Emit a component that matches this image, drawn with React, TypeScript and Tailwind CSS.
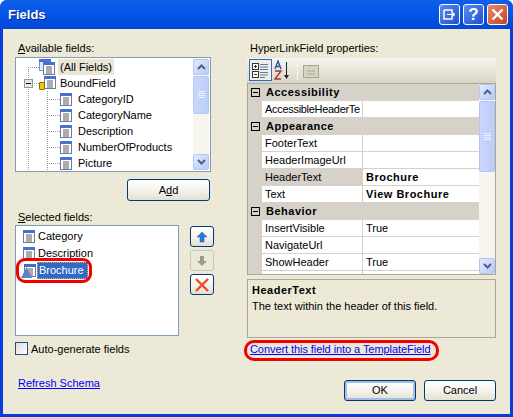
import type { ReactNode } from "react";

const font = { fontFamily: "'Liberation Sans', Arial, sans-serif" };

function FieldIcon({ tint = false }: { tint?: boolean }) {
  return (
    <svg width="13" height="13" viewBox="0 0 13 13" className="shrink-0">
      <rect x="0.5" y="0.5" width="11" height="12" fill="#fff" stroke="#6b7b9c" />
      <rect x="0" y="0" width="12" height="3" fill={tint ? "#3f6fc0" : "#4a6fd0"} />
      <path d="M3 5h6M3 7h6M3 9h6M3 11h6" stroke="#5a5a5a" />
    </svg>
  );
}

function Connector({ width, lines, tick, last }: { width: number; lines: number[]; tick: number; last?: boolean }) {
  return (
    <svg width={width} height="16" className="shrink-0">
      {lines.map((x) => (
        <line key={x} x1={x + 0.5} x2={x + 0.5} y1={last && x === 12 ? 8 : 0} y2="16" stroke="#9a9a9a" strokeDasharray="1 1" />
      ))}
      <line x1={tick} x2={width} y1="8.5" y2="8.5" stroke="#9a9a9a" strokeDasharray="1 1" />
    </svg>
  );
}

function TreeLeaf({ label }: { label: string }) {
  return (
    <div className="flex h-4 items-center">
      <Connector width={44} lines={[12, 31]} tick={31} />
      <FieldIcon />
      <span className="ml-[5px]">{label}</span>
    </div>
  );
}

function ScrollArrow({ up, className = "" }: { up?: boolean; className?: string }) {
  return (
    <div className={`flex h-[16px] items-center justify-center rounded-[2px] border border-[#b5c7f0] bg-gradient-to-br from-[#e3ebfe] to-[#b7c9f8] ${className}`}>
      <svg width="9" height="6" viewBox="0 0 9 6">
        <path d={up ? "M1 5l3.5-3.5L8 5" : "M1 1l3.5 3.5L8 1"} fill="none" stroke="#4d6185" strokeWidth="2" />
      </svg>
    </div>
  );
}

function ScrollBar({ thumb, gap }: { thumb: number; gap: number }) {
  return (
    <div className="flex w-[16px] shrink-0 flex-col self-stretch bg-[#f6f5ee]">
      <ScrollArrow up />
      <div className="mt-[1px] flex flex-col items-center justify-center gap-[1px] rounded-[2px] border border-[#b5c7f0] bg-gradient-to-r from-[#c9d7fc] to-[#bccdf9]" style={{ height: thumb }}>
        <div className="h-[1px] w-[7px] bg-[#eef2fe]" />
        <div className="h-[1px] w-[7px] bg-[#eef2fe]" />
        <div className="h-[1px] w-[7px] bg-[#eef2fe]" />
        <div className="h-[1px] w-[7px] bg-[#eef2fe]" />
      </div>
      <div style={{ height: gap }} />
      <ScrollArrow />
    </div>
  );
}

function XpButton({ children, isDefault, className = "" }: { children: ReactNode; isDefault?: boolean; className?: string }) {
  return (
    <div className={`flex items-center justify-center rounded-[3px] border border-[#003c74] bg-gradient-to-b from-white via-[#f5f4ee] to-[#e3e0d0] ${isDefault ? "shadow-[inset_0_0_0_2px_#a4bce8]" : ""} ${className}`}>
      {children}
    </div>
  );
}

function CategoryRow({ label }: { label: string }) {
  return (
    <div className="flex h-[17px] items-center bg-[#d6d2ca] font-bold tracking-[0.5px]">
      <div className="ml-[3px] flex h-[9px] w-[9px] items-center justify-center border border-black">
        <div className="h-[1px] w-[5px] bg-black" />
      </div>
      <span className="ml-[6px]">{label}</span>
    </div>
  );
}

function PropRow({ name, value, bold, selected, tight }: { name: string; value?: string; bold?: boolean; selected?: boolean; tight?: boolean }) {
  return (
    <div className="flex h-[17px] bg-[#d6d2ca]">
      <div className="w-[14px] shrink-0" />
      <div className={`flex w-[100px] shrink-0 items-center overflow-hidden whitespace-nowrap border-b border-[#d6d2ca] pl-[3px] ${selected ? "bg-[#d6d2ca]" : "bg-white"} ${tight ? "tracking-[-0.3px]" : ""}`}>{name}</div>
      <div className={`ml-[1px] flex flex-1 items-center border-b border-[#d6d2ca] bg-white pl-[3px] ${bold ? "font-bold tracking-[0.5px]" : ""}`}>{value}</div>
    </div>
  );
}

export default function App() {
  return (
    <div className="relative flex h-[417px] w-[513px] flex-col overflow-hidden rounded-t-[7px] bg-[#0a3be0] text-[11px] leading-[13px] text-black" style={font}>
      {/* title bar */}
      <div className="flex h-[29px] shrink-0 items-center bg-gradient-to-b from-[#0f5fe8] via-[#0454e6] to-[#0047d8] pl-[8px] pr-[5px]">
        <span className="text-[13px] font-bold text-white [text-shadow:1px_1px_#0a2a90]">Fields</span>
        <div className="ml-auto flex gap-[3px]">
          <div className="flex h-[21px] w-[21px] items-center justify-center rounded-[3px] border border-white bg-gradient-to-br from-[#5a8cf0] to-[#1f4fd0]">
            <svg width="13" height="11" viewBox="0 0 13 11">
              <path d="M1 1h8v2M1 1v9h8V8" fill="none" stroke="#fff" strokeWidth="1.5" />
              <path d="M4 5.5h5V3l3 2.5L9 8V5.5" fill="#fff" stroke="#fff" />
            </svg>
          </div>
          <div className="flex h-[21px] w-[21px] items-center justify-center rounded-[3px] border border-white bg-gradient-to-br from-[#5a8cf0] to-[#1f4fd0] text-[17px] font-bold text-white">?</div>
          <div className="flex h-[21px] w-[21px] items-center justify-center rounded-[3px] border border-white bg-gradient-to-br from-[#e88a6a] to-[#c8401c]">
            <svg width="13" height="13" viewBox="0 0 13 13">
              <path d="M1.5 1.5l10 10M11.5 1.5l-10 10" stroke="#fff" strokeWidth="2.4" />
            </svg>
          </div>
        </div>
      </div>

      {/* dialog body */}
      <div className="mx-[3px] mb-[3px] flex flex-1 flex-col bg-[#ebe8d9] bg-[radial-gradient(#f5f1c4_0.6px,transparent_0.8px)] bg-[size:4px_4px] pl-[12px] pr-[14px]">
        <div className="flex flex-1 gap-[33px]">
          {/* left column */}
          <div className="flex w-[199px] shrink-0 flex-col">
            <div className="ml-[3px] mt-[13px] h-[13px]"><span className="underline">A</span>vailable fields:</div>
            <div className="mt-[2px] flex h-[115px] w-[196px] gap-[1px] border border-[#7f9db9] bg-white py-[1px] pr-[1px]">
              <div className="flex-1 overflow-hidden whitespace-nowrap">
                <div className="flex h-4 items-center">
                  <Connector width={23} lines={[12]} tick={12} last />
                  <svg width="17" height="16" viewBox="0 0 17 16" className="shrink-0">
                    <rect x="0.5" y="0.5" width="11" height="11" fill="#dfe7fb" stroke="#7d93c8" />
                    <rect x="0" y="0" width="12" height="3" fill="#4a6fd0" />
                    <rect x="4.5" y="3.5" width="11" height="12" fill="#fff" stroke="#6b7b9c" />
                    <rect x="4" y="3" width="12" height="3" fill="#4a6fd0" />
                    <path d="M7 8h6M7 10h6M7 12h6M7 14h6" stroke="#5a5a5a" />
                  </svg>
                  <span className="ml-[2px] flex h-4 items-center bg-[#e9e6d6] px-[2px]">(All Fields)</span>
                </div>
                <div className="flex h-4 items-center">
                  <div className="relative h-4 w-[23px] shrink-0">
                    <Connector width={23} lines={[12]} tick={12} />
                    <div className="absolute left-[8px] top-[4px] flex h-[9px] w-[9px] items-center justify-center border border-[#7f9db9] bg-[#ece9d8]">
                      <div className="h-[1px] w-[5px] bg-black" />
                    </div>
                  </div>
                  <div className="relative h-4 w-[17px] shrink-0">
                    <div className="absolute left-[5px] top-[1px]"><FieldIcon /></div>
                    <div className="absolute left-0 top-[7px] h-[8px] w-[6px] rounded-[1px] border border-[#8a6d00] bg-[#f3c316]" />
                  </div>
                  <span className="ml-[4px]">BoundField</span>
                </div>
                <TreeLeaf label="CategoryID" />
                <TreeLeaf label="CategoryName" />
                <TreeLeaf label="Description" />
                <TreeLeaf label="NumberOfProducts" />
                <TreeLeaf label="Picture" />
              </div>
              <ScrollBar thumb={38} gap={41} />
            </div>
            <XpButton className="ml-[112px] mt-[7px] h-[22px] w-[83px]"><span>A<span className="underline">d</span>d</span></XpButton>
            <div className="ml-[3px] mt-[10px] h-[13px]"><span className="underline">S</span>elected fields:</div>
            <div className="mt-[1px] flex gap-[11px]">
              <div className="h-[111px] w-[164px] whitespace-nowrap border border-[#7f9db9] bg-white pt-[2px]">
                <div className="flex h-[17px] items-center pl-[7px]">
                  <FieldIcon />
                  <span className="ml-[2px]">Category</span>
                </div>
                <div className="flex h-[17px] items-center pl-[7px]">
                  <FieldIcon />
                  <span className="ml-[2px]">Description</span>
                </div>
                <div className="flex h-[17px] items-center pl-[5px]">
                  <div className="relative h-[14px] w-[16px] shrink-0">
                    <div className="absolute left-[3px] top-0"><FieldIcon tint /></div>
                    <svg width="11" height="11" viewBox="0 0 11 11" className="absolute bottom-0 left-0">
                      <path d="M5.5 0L11 11H0z" fill="#5d82c8" />
                    </svg>
                  </div>
                  <span className="flex h-[17px] w-[51px] items-center border border-dotted border-[#e8b050] bg-[#316ac5] px-[1px] text-white">Brochure</span>
                </div>
              </div>
              <div className="flex flex-col gap-[3px] pt-[1px]">
                <XpButton className="h-[21px] w-[24px]">
                  <svg width="12" height="12" viewBox="0 0 12 12"><path d="M6 1l5 5H8v5H4V6H1z" fill="#2a7be0" stroke="#1a55b0" strokeWidth="0.5" /></svg>
                </XpButton>
                <div className="flex h-[21px] w-[24px] items-center justify-center rounded-[3px] border border-[#cbc7b8] bg-[#ece9d8]">
                  <svg width="12" height="12" viewBox="0 0 12 12"><path d="M6 11L1 6h3V1h4v5h3z" fill="#9a9a92" /></svg>
                </div>
                <XpButton className="h-[21px] w-[24px]">
                  <svg width="16" height="16" viewBox="0 0 16 16"><path d="M2 2l12 12M14 2L2 14" stroke="#ee4a2a" strokeWidth="2.4" /></svg>
                </XpButton>
              </div>
            </div>
            <div className="mt-[6px] flex h-[13px] items-start">
              <div className="h-[13px] w-[13px] border border-[#1c5180] bg-gradient-to-br from-[#dcdcd7] to-white" />
              <span className="ml-[3px] mt-[1px]">Auto-generate fields</span>
            </div>
            <div className="ml-[3px] mt-[21px] pt-[1px] text-[#0000ff] underline">Refresh Schema</div>
          </div>

          {/* right column */}
          <div className="flex w-[249px] shrink-0 flex-col">
            <div className="ml-[3px] mt-[13px] h-[13px]">HyperLinkField <span className="underline">p</span>roperties:</div>
            <div className="mt-[3px] flex h-[25px] items-start gap-[2px] bg-gradient-to-b from-[#f7f6f1] to-[#d8d4c4] pl-[2px] pt-[1px]">
              <div className="flex h-[22px] w-[23px] items-center justify-center border border-[#316ac5] bg-[#f1efe4]">
                <svg width="17" height="16" viewBox="0 0 17 16">
                  <rect x="0.5" y="1.5" width="6" height="6" fill="#fff" stroke="#333" />
                  <rect x="0.5" y="9.5" width="6" height="6" fill="#fff" stroke="#333" />
                  <path d="M2 4.5h3M3.5 3v3M2 12.5h3" stroke="#333" />
                  <path d="M8 2.5h8M8 5h8M8 7.5h8M8 10.5h8M8 13h8M8 15.5h5" stroke="#5a7aa8" />
                </svg>
              </div>
              <svg width="17" height="20" viewBox="0 0 17 20" className="mt-[1px] shrink-0">
                <path d="M1 9l3-8 3 8M2 6.5h4" fill="none" stroke="#2a4fb8" strokeWidth="1.4" />
                <path d="M1 11h6L1 19h6" fill="none" stroke="#a83232" strokeWidth="1.4" />
                <path d="M12.5 2v15" stroke="#222" />
                <path d="M10 15h5l-2.5 4z" fill="#222" />
              </svg>
              <div className="ml-[4px] mt-[1px] h-[20px] w-[1px] bg-[#f7f6f1]" />
              <svg width="17" height="15" viewBox="0 0 17 15" className="ml-[3px] mt-[4px] shrink-0">
                <rect x="0.5" y="2.5" width="15" height="12" fill="#d8d4c4" stroke="#a8a498" />
                <path d="M1 2.5h6v2M4 8h8M4 11h8" fill="none" stroke="#a8a498" />
              </svg>
            </div>
            <div className="flex h-[192px] overflow-hidden border border-[#aca899] bg-white">
              <div className="flex-1">
                <CategoryRow label="Accessibility" />
                <PropRow name="AccessibleHeaderTe" tight />
                <CategoryRow label="Appearance" />
                <PropRow name="FooterText" />
                <PropRow name="HeaderImageUrl" />
                <PropRow name="HeaderText" value="Brochure" bold selected />
                <PropRow name="Text" value="View Brochure" bold />
                <CategoryRow label="Behavior" />
                <PropRow name="InsertVisible" value="True" />
                <PropRow name="NavigateUrl" />
                <PropRow name="ShowHeader" value="True" />
                <PropRow name="" />
              </div>
              <ScrollBar thumb={71} gap={86} />
            </div>
            <div className="mt-[4px] h-[59px] border border-[#aca899] px-[4px] pt-[4px]">
              <div className="font-bold tracking-[0.5px]">HeaderText</div>
              <div className="mt-[3px]">The text within the header of this field.</div>
            </div>
            <div className="ml-[3px] mt-[5px] tracking-[-0.07px] text-[#0000ff] underline">Convert this field into a TemplateField</div>
            <div className="mt-[24px] flex gap-[8px] pl-[97px]">
              <XpButton isDefault className="h-[21px] w-[72px]">OK</XpButton>
              <XpButton className="h-[21px] w-[72px]">Cancel</XpButton>
            </div>
          </div>
        </div>
      </div>

      {/* red annotation ovals */}
      <div className="absolute left-[16px] top-[258px] h-[25px] w-[76px] rounded-[9px] border-[3px] border-[#f00000]" />
      <div className="absolute left-[244px] top-[340px] h-[21px] w-[195px] rounded-[10px] border-[3px] border-[#f00000]" />
    </div>
  );
}
